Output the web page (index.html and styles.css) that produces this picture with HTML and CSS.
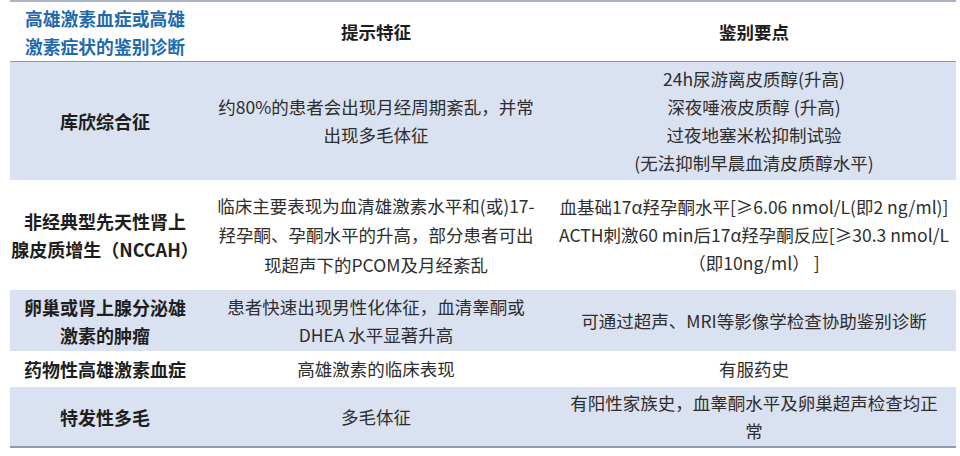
FILE: index.html
```html
<!DOCTYPE html>
<html lang="zh-CN">
<head>
<meta charset="utf-8">
<title>高雄激素血症或高雄激素症状的鉴别诊断</title>
<link rel="stylesheet" href="styles.css">
</head>
<body>
<table class="ddx">
  <colgroup>
    <col class="c1">
    <col class="c2">
    <col class="c3">
  </colgroup>
  <thead>
    <tr>
      <th class="corner">高雄激素血症或高雄<br>激素症状的鉴别诊断</th>
      <th>提示特征</th>
      <th>鉴别要点</th>
    </tr>
  </thead>
  <tbody>
    <tr class="shade r1">
      <td class="name">库欣综合征</td>
      <td>约80%的患者会出现月经周期紊乱，并常<br>出现多毛体征</td>
      <td>24h尿游离皮质醇(升高)<br>深夜唾液皮质醇 (升高)<br>过夜地塞米松抑制试验<br>(无法抑制早晨血清皮质醇水平)</td>
    </tr>
    <tr class="r2">
      <td class="name">非经典型先天性肾上<br>腺皮质增生（NCCAH）</td>
      <td>临床主要表现为血清雄激素水平和(或)17-<br>羟孕酮、孕酮水平的升高，部分患者可出<br>现超声下的PCOM及月经紊乱</td>
      <td>血基础17α羟孕酮水平[≥6.06 nmol/L(即2 ng/ml)]<br>ACTH刺激60 min后17α羟孕酮反应[≥30.3 nmol/L<br>（即10ng/ml） ]</td>
    </tr>
    <tr class="shade r3">
      <td class="name">卵巢或肾上腺分泌雄<br>激素的肿瘤</td>
      <td>患者快速出现男性化体征，血清睾酮或<br>DHEA 水平显著升高</td>
      <td>可通过超声、MRI等影像学检查协助鉴别诊断</td>
    </tr>
    <tr class="r4">
      <td class="name">药物性高雄激素血症</td>
      <td>高雄激素的临床表现</td>
      <td>有服药史</td>
    </tr>
    <tr class="shade r5">
      <td class="name">特发性多毛</td>
      <td>多毛体征</td>
      <td>有阳性家族史，血睾酮水平及卵巢超声检查均正<br>常</td>
    </tr>
  </tbody>
</table>
</body>
</html>
```
FILE: styles.css
```css
html, body {
  margin: 0;
  padding: 0;
  background: #ffffff;
}

body {
  font-family: "Noto Sans CJK SC", "Noto Sans", "Liberation Sans", sans-serif;
}

.ddx {
  margin-left: 10px;
  width: 946px;
  border-collapse: collapse;
  table-layout: fixed;
  border-top: 2px solid #aab4c8;
  border-bottom: 2px solid #8f9ab0;
  font-size: 17.5px;
  line-height: 28px;
  color: #2e2e2e;
}

.c1 { width: 190px; }
.c2 { width: 352px; }
.c3 { width: 404px; }

.ddx th,
.ddx td {
  padding: 0;
  text-align: center;
  vertical-align: middle;
  white-space: nowrap;
}

.ddx thead th {
  height: 59px;
  border-bottom: 1px solid #8e98ac;
  font-weight: 700;
  color: #1c1c1c;
}

.ddx thead th.corner {
  color: #1f6aac;
  font-size: 17.8px;
}

.shade td {
  background: #dae1f0;
}

.ddx td.name {
  font-weight: 700;
  font-size: 18px;
  color: #1e1e1e;
}

.r1 td { height: 118px; }
.r2 td { height: 110px; }
.r2 td:nth-child(2) { line-height: 29.5px; }
.r3 td { height: 61px; }
.r4 td { height: 36px; }
.r5 td { height: 59px; }
```
